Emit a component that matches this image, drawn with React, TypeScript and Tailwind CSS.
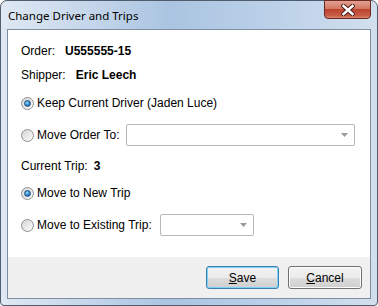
import React from 'react';

function Radio({ checked }: { checked?: boolean }) {
  return (
    <span className="w-[13px] h-[13px] rounded-full border border-[#8f8f8f] bg-[linear-gradient(135deg,#d6d6d6,#fbfbfb)] flex items-center justify-center shrink-0">
      {checked && (
        <span className="w-[7px] h-[7px] rounded-full border border-[#1f4f7f] bg-[radial-gradient(circle_at_40%_35%,#9fe0ff_0%,#3a92d6_45%,#14508f_100%)]" />
      )}
    </span>
  );
}

function Combo({ width }: { width: string }) {
  return (
    <div className={`${width} h-[22px] rounded-[2px] border border-[#b5b7bb] bg-white flex items-center justify-end pr-[6px]`}>
      <svg width="7" height="4" viewBox="0 0 7 4">
        <path d="M0 0 L7 0 L3.5 4 Z" fill="#9a9a9a" />
      </svg>
    </div>
  );
}

export default function App() {
  return (
    <div className="w-[378px] h-[306px] flex flex-col rounded-t-[7px] rounded-b-[4px] border border-[#4f5d6e] bg-[linear-gradient(90deg,#dfe8f3_0%,#c3d5ea_25%,#aac4e1_45%,#bad0e8_70%,#d2dfee_100%)] font-['Liberation_Sans',Arial,sans-serif] text-[12px] text-black">
      {/* Title bar */}
      <div className="h-[28px] flex items-start justify-between pl-[7px] pr-[6px]">
        <span className="mt-[6px] font-['Noto_Sans',sans-serif] text-[11.5px] text-black">Change Driver and Trips</span>
        <div className="w-[47px] h-[19px] -mt-px rounded-b-[4px] border border-[#6b2a20] bg-[linear-gradient(180deg,#e4a093_0%,#d27763_45%,#bd4430_50%,#c85b45_85%,#d9866f_100%)] flex items-center justify-center">
          <svg width="14" height="12" viewBox="0 0 14 12">
            <path d="M2.5 2 L11.5 10 M11.5 2 L2.5 10" stroke="#4a1f18" strokeWidth="4.5" strokeLinecap="square" />
            <path d="M2.5 2 L11.5 10 M11.5 2 L2.5 10" stroke="#ffffff" strokeWidth="2.5" strokeLinecap="square" />
          </svg>
        </div>
      </div>

      {/* Client area */}
      <div className="flex-1 mx-[6px] mb-[6px] border border-[#7e8fa5] bg-white flex flex-col">
        <div className="flex-1 pl-[13px] pt-[10px]">
          <div className="h-[22px] flex items-center">
            <span>Order:</span>
            <span className="ml-[10px] font-bold">U555555-15</span>
          </div>
          <div className="h-[22px] mt-[2px] flex items-center">
            <span>Shipper:</span>
            <span className="ml-[10px] font-bold">Eric Leech</span>
          </div>
          <div className="h-[22px] mt-[6px] flex items-center">
            <Radio checked />
            <span className="ml-[3px]">Keep Current Driver (Jaden Luce)</span>
          </div>
          <div className="h-[22px] mt-[10px] flex items-center">
            <Radio />
            <span className="ml-[3px]">Move Order To:</span>
            <div className="ml-[7px]">
              <Combo width="w-[229px]" />
            </div>
          </div>
          <div className="h-[22px] mt-[9px] flex items-center">
            <span>Current Trip:</span>
            <span className="ml-[6px] font-bold">3</span>
          </div>
          <div className="h-[22px] mt-[5px] flex items-center">
            <Radio checked />
            <span className="ml-[3px]">Move to New Trip</span>
          </div>
          <div className="h-[22px] mt-[10px] flex items-center">
            <Radio />
            <span className="ml-[3px]">Move to Existing Trip:</span>
            <div className="ml-[8px]">
              <Combo width="w-[94px]" />
            </div>
          </div>
        </div>

        {/* Footer */}
        <div className="h-[41px] bg-[#f0f0f0] flex items-start justify-end gap-[9px] pr-[8px] pt-[9px]">
          <button className="w-[73px] h-[23px] rounded-[3px] border border-[#3c7fb1] bg-[linear-gradient(180deg,#f2f2f2_0%,#ebebeb_50%,#dddddd_51%,#cfcfcf_100%)] shadow-[inset_0_0_0_1px_#7fd0f7]">
            <span className="underline">S</span>ave
          </button>
          <button className="w-[74px] h-[23px] rounded-[3px] border border-[#707070] bg-[linear-gradient(180deg,#f2f2f2_0%,#ebebeb_50%,#dddddd_51%,#cfcfcf_100%)] shadow-[inset_0_0_0_1px_#fcfcfc]">
            <span className="underline">C</span>ancel
          </button>
        </div>
      </div>
    </div>
  );
}
